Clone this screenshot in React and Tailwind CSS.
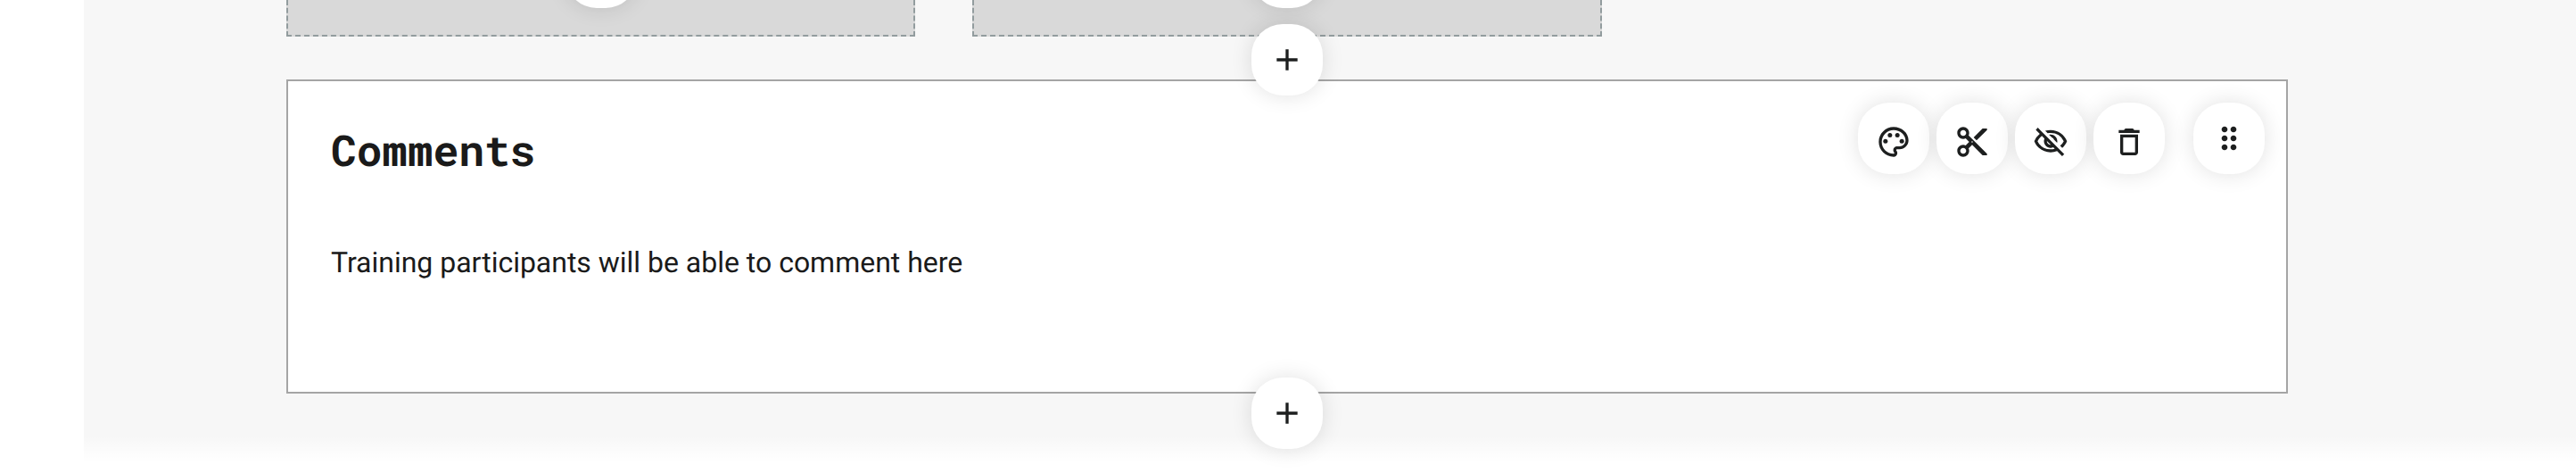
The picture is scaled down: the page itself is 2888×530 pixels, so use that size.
import React from 'react';
import {
    MdAdd,
    MdContentCut,
    MdDeleteOutline,
    MdDragIndicator,
    MdOutlinePalette,
    MdOutlineVisibilityOff
} from 'react-icons/md';

const TOOLS = [
    { id: 'style', label: 'Change style', icon: MdOutlinePalette },
    { id: 'cut', label: 'Cut block', icon: MdContentCut },
    { id: 'hide', label: 'Hide block', icon: MdOutlineVisibilityOff },
    { id: 'delete', label: 'Delete block', icon: MdDeleteOutline }
];

const RoundButton = ({ title, className = '', children }) => (
    <button
        title={title}
        className={`flex size-20 shrink-0 items-center justify-center rounded-[35px] bg-white text-[#1d1f1f] shadow-[0_0_24px_rgba(0,0,0,0.12)] ${className}`}
    >
        {children}
    </button>
);

const DropZone = ({ className }) => (
    <div className={`relative h-full border-2 border-t-0 border-dashed border-[#929c9e] bg-[#d9d9d9] ${className}`}>
        <RoundButton title="Add block" className="absolute bottom-[30px] left-1/2 -translate-x-1/2" />
    </div>
);

export default function App() {
    return (
        <div className="flex h-[530px] w-[2888px] overflow-hidden bg-white font-['Roboto',sans-serif] text-[#1a1a1a] [text-rendering:geometricPrecision]">
            <aside className="w-[94px] shrink-0 bg-white" />
            <main className="relative flex-1 bg-[#f7f7f7] pl-[227px]">
                <div className="flex h-[41px] gap-16">
                    <DropZone className="w-[705px]" />
                    <DropZone className="w-[706px]" />
                </div>

                {/* fade under the page footer */}
                <div className="absolute inset-x-0 bottom-0 h-[42px] bg-linear-to-b from-white/0 via-white via-70% to-white" />

                <section className="relative mt-12 h-[352px] w-[2244px] border-2 border-[#a5a5a5] bg-white px-12">
                    <RoundButton title="Add block" className="absolute -top-16 left-1/2 -translate-x-1/2">
                        <MdAdd size={40} />
                    </RoundButton>

                    <div className="flex items-start justify-between">
                        <div>
                            <h2 className="mt-[46px] font-['Roboto_Mono','DejaVu_Sans_Mono',monospace] text-[48px] leading-[64px] font-bold tracking-[-0.15px]">
                                Comments
                            </h2>
                            <p className="mt-[69px] text-[32px] leading-[48px] tracking-[-0.015px]">
                                Training participants will be able to comment here
                            </p>
                        </div>
                        <div className="mt-6 -mr-6 flex gap-2">
                            {TOOLS.map(({ id, label, icon: Icon }) => (
                                <RoundButton key={id} title={label} className="pt-2">
                                    <Icon size={40} />
                                </RoundButton>
                            ))}
                            <RoundButton title="Move block" className="ml-6">
                                <MdDragIndicator size={40} />
                            </RoundButton>
                        </div>
                    </div>

                    <RoundButton title="Add block" className="absolute -bottom-16 left-1/2 -translate-x-1/2">
                        <MdAdd size={40} />
                    </RoundButton>
                </section>
            </main>
        </div>
    );
}
